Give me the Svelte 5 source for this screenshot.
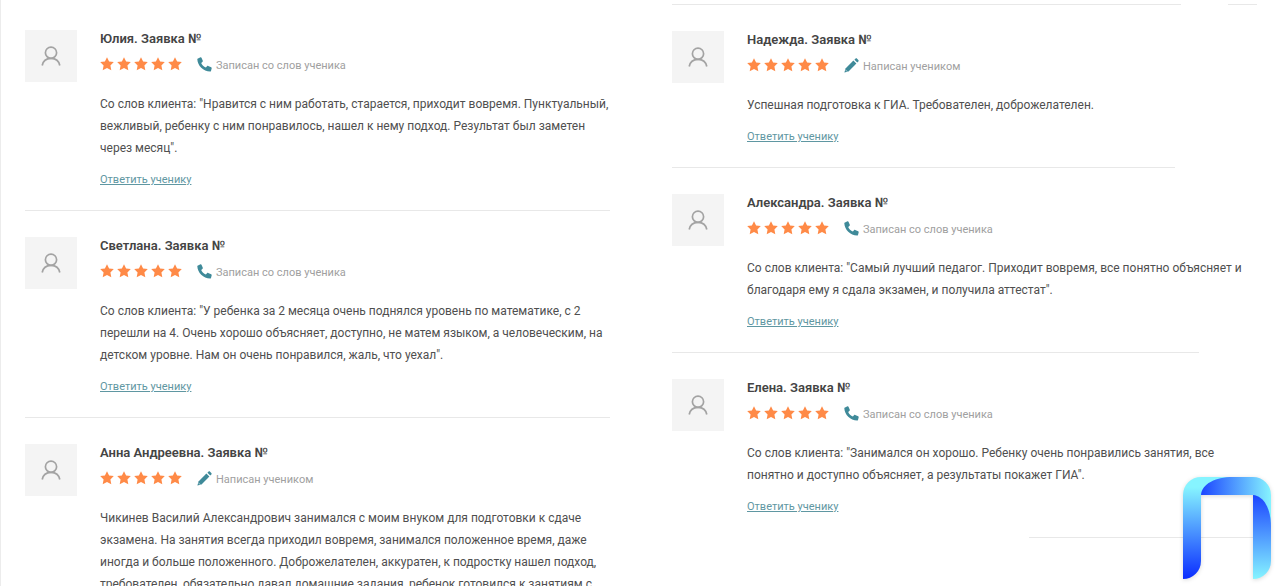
<script lang="ts">
  interface Review {
    name: string;
    source: 'phone' | 'pencil';
    text: string;
    line: [number, number]; // start and end of the divider, in percent
  }

  const sourceLabels = {
    phone: 'Записан со слов ученика',
    pencil: 'Написан учеником',
  };

  const columns: Review[][] = [
    [
      {
        name: 'Юлия',
        source: 'phone',
        text: 'Со слов клиента: "Нравится с ним работать, старается, приходит вовремя. Пунктуальный, вежливый, ребенку с ним понравилось, нашел к нему подход. Результат был заметен через месяц".',
        line: [0, 100],
      },
      {
        name: 'Светлана',
        source: 'phone',
        text: 'Со слов клиента: "У ребенка за 2 месяца очень поднялся уровень по математике, с 2 перешли на 4. Очень хорошо объясняет, доступно, не матем языком, а человеческим, на детском уровне. Нам он очень понравился, жаль, что уехал".',
        line: [0, 100],
      },
      {
        name: 'Анна Андреевна',
        source: 'pencil',
        text: 'Чикинев Василий Александрович занимался с моим внуком для подготовки к сдаче экзамена. На занятия всегда приходил вовремя, занимался положенное время, даже иногда и больше положенного. Доброжелателен, аккуратен, к подростку нашел подход, требователен, обязательно давал домашние задания, ребенок готовился к занятиям с',
        line: [0, 100],
      },
    ],
    [
      {
        name: 'Надежда',
        source: 'pencil',
        text: 'Успешная подготовка к ГИА. Требователен, доброжелателен.',
        line: [0, 86],
      },
      {
        name: 'Александра',
        source: 'phone',
        text: 'Со слов клиента: "Самый лучший педагог. Приходит вовремя, все понятно объясняет и благодаря ему я сдала экзамен, и получила аттестат".',
        line: [0, 90],
      },
      {
        name: 'Елена',
        source: 'phone',
        text: 'Со слов клиента: "Занимался он хорошо. Ребенку очень понравились занятия, все понятно и доступно объясняет, а результаты покажет ГИА".',
        line: [61, 100],
      },
    ],
  ];
</script>

<main class="page">
  {#each columns as reviews, i}
    <section class="column">
      <div class="top-line" class:visible={i === 1}>
        <span class="long"></span>
        <span class="short"></span>
      </div>
      {#each reviews as review}
        <article class="review">
          <div class="avatar">
            <svg width="20" height="20" viewBox="0 0 20 20" fill="none" stroke="#a3a3a3" stroke-width="1.7">
              <circle cx="10" cy="6.700" r="5.600" />
              <path d="M1.200 19.500C2 15 5.500 12.300 10 12.300s8 2.700 8.800 7.200" />
            </svg>
          </div>
          <div class="content">
            <h3>{review.name}. Заявка №</h3>
            <div class="meta">
              <div class="stars" role="img" aria-label="5 из 5">
                {#each Array(5) as _}
                  <svg width="14" height="14" viewBox="0 0 14 14" fill="#ff8a47">
                    <path d="M7 .2l2.100 4.300 4.700.6-3.400 3.300.9 4.900L7 11.100l-4.300 2.200.9-4.900L.2 5.100l4.700-.6z" />
                  </svg>
                {/each}
              </div>
              <div class="source">
                {#if review.source === 'phone'}
                  <svg width="15" height="15" viewBox="0 0 15 15" fill="#3f8a99">
                    <path d="M1 1.400L3.500.3c.4-.2.8 0 1 .4l1.300 3c.1.400 0 .7-.2 1L4.200 5.900c.9 2 2.500 3.600 4.700 4.700l1.300-1.500c.2-.3.6-.4 1-.2l3 1.300c.4.200.6.600.5 1l-.7 2.700c-.1.500-.5.700-.9.700C6.400 14.600.5 8.700.3 2.300c0-.4.3-.7.7-.9z" />
                  </svg>
                {:else}
                  <svg width="15" height="15" viewBox="0 0 15 15" fill="#3f8a99">
                    <path d="M9.400 2.600l3 3-7.900 7.900-4.100 1.100 1.100-4.100z" />
                    <path d="M10.400 1.700l1-1c.5-.5 1.200-.5 1.700 0l1.200 1.200c.5.500.5 1.200 0 1.700l-1 1z" />
                    <path d="M1.200 11.600l2.200 2.200" stroke="#fff" stroke-width=".6" />
                  </svg>
                {/if}
                <span>{sourceLabels[review.source]}</span>
              </div>
            </div>
            <p>{review.text}</p>
            <a href="#reply">Ответить ученику</a>
          </div>
        </article>
        <div class="line">
          <span style="margin-left: {review.line[0]}%; width: {review.line[1] - review.line[0]}%"></span>
        </div>
      {/each}
    </section>
  {/each}

  <svg class="logo" width="88" height="102" viewBox="0 0 88 102" aria-hidden="true">
    <defs>
      <linearGradient id="left" x1="0" y1="0" x2="0" y2="1">
        <stop offset="0" stop-color="#86f4ff" />
        <stop offset="0.1" stop-color="#86f4ff" />
        <stop offset="1" stop-color="#0a2cff" />
      </linearGradient>
      <linearGradient id="top" x1="0" y1="0" x2="1" y2="0">
        <stop offset="0" stop-color="#1c45ff" />
        <stop offset="1" stop-color="#86f4ff" />
      </linearGradient>
      <linearGradient id="right" x1="0" y1="0" x2="0" y2="1">
        <stop offset="0" stop-color="#1c45ff" />
        <stop offset="1" stop-color="#86f4ff" />
      </linearGradient>
    </defs>
    <path fill="url(#left)" d="M0 102V18A18 18 0 0 1 18 0H50L18 18V84A18 18 0 0 1 0 102z" />
    <path fill="url(#top)" d="M18 18C19 7 32 0 50 0H70A18 18 0 0 1 88 18V50L70 18z" />
    <path fill="url(#right)" d="M70 18C81 19 88 32 88 50V84A18 18 0 0 1 70 102z" />
  </svg>
</main>

<style>
  :global(body) {
    margin: 0;
    background: #fff;
  }

  .page {
    display: grid;
    grid-template-columns: 1fr 1fr;
    column-gap: 62px;
    box-sizing: border-box;
    height: 100vh;
    padding: 4px 23px 0 24px;
    border-left: 1px solid #ececec;
    overflow: hidden;
    font-family: Roboto, 'Liberation Sans', sans-serif;
    font-size: 12px;
    color: #4f4f4f;
  }

  .top-line {
    display: none;
    justify-content: space-between;
    height: 1px;
  }

  .top-line.visible {
    display: flex;
  }

  .top-line span,
  .line span {
    display: block;
    height: 1px;
    background: #e8e8e8;
  }

  .long {
    width: 87%;
  }

  .short {
    width: 5%;
  }

  .review {
    display: flex;
    gap: 23px;
    padding: 26px 0 19px;
  }

  .avatar {
    display: flex;
    flex: none;
    align-items: center;
    justify-content: center;
    width: 52px;
    height: 52px;
    background: #f4f4f4;
  }

  .content {
    flex: 1;
    padding-top: 1px;
  }

  h3 {
    margin: 0 0 8px;
    font-size: 13px;
    line-height: 16px;
    font-weight: 600;
    color: #444;
  }

  .meta {
    display: flex;
    align-items: center;
    gap: 15px;
    height: 18px;
    margin-bottom: 20px;
  }

  .stars {
    display: flex;
    gap: 3px;
  }

  .source {
    display: flex;
    align-items: center;
    gap: 4px;
    font-size: 11px;
    line-height: 16px;
    color: #a0a0a0;
  }

  .source span {
    padding-top: 3px;
  }

  p {
    margin: 0 0 10px;
    line-height: 22px;
  }

  a {
    display: block;
    width: fit-content;
    font-size: 11px;
    line-height: 22px;
    color: #5f97a2;
  }

  .logo {
    position: fixed;
    right: 9px;
    bottom: 7px;
    filter: drop-shadow(0 1px 2px rgba(0, 0, 0, 0.15));
  }
</style>
